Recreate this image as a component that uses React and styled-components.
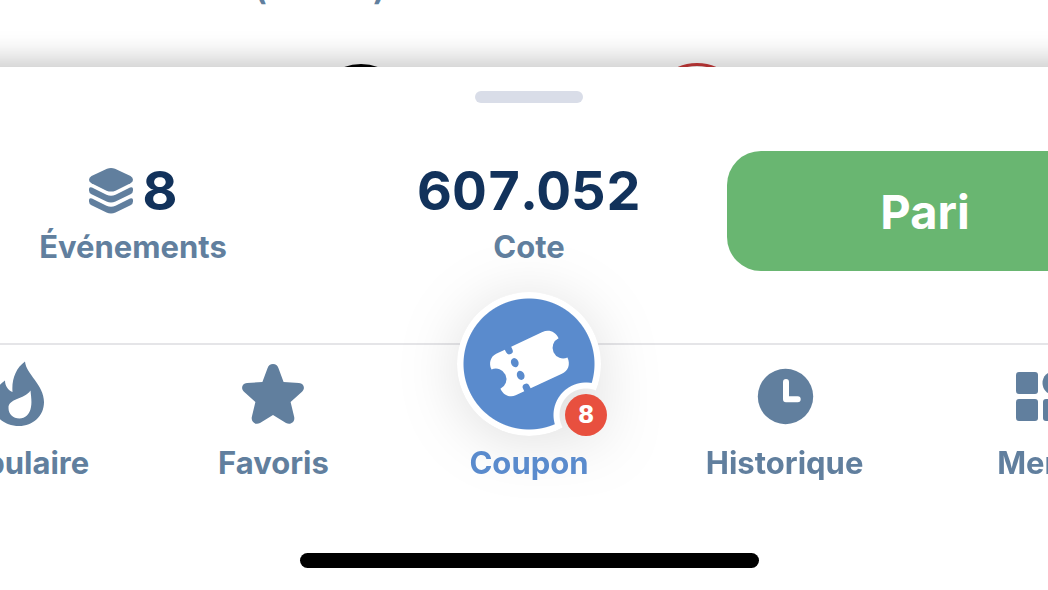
import React from 'react';
import styled, { createGlobalStyle } from 'styled-components';

const colors = {
  slate: '#617f9e',
  navy: '#12325b',
  blue: '#5a8bcd',
  green: '#69b671',
  red: '#e8503f',
};

const GlobalStyle = createGlobalStyle`
  * {
    box-sizing: border-box;
  }

  body {
    margin: 0;
    background-color: #fff;
    font-family: Inter, 'Liberation Sans', sans-serif;
    overflow: hidden;
  }
`;

const Viewport = styled.div`
  min-height: 100vh;
  overflow: hidden;
`;

// the screen is wider than the window and is cut off on both sides
const Screen = styled.div`
  display: flex;
  flex-direction: column;
  min-height: 100vh;
  margin: 0 -120px 0 -110px;
`;

const Backdrop = styled.div`
  display: flex;
  flex-direction: column;
  gap: 56px;
  height: 67px;
  overflow: hidden;
`;

const Score = styled.div`
  display: flex;
  flex-shrink: 0;
  justify-content: space-between;
  width: 130px;
  margin: -29px 0 0 365px;
  color: ${colors.slate};
  font-size: 31px;
  font-weight: 700;
  line-height: 36px;
`;

const Teams = styled.div`
  display: flex;
  flex-shrink: 0;
  justify-content: center;
  gap: 242px;
`;

const TeamSlot = styled.div`
  display: flex;
  align-items: center;
  justify-content: center;
  width: 94px;
`;

const TeamLogo = styled.div`
  width: ${(props) => props.$size}px;
  height: ${(props) => props.$size}px;
  border: 3px solid ${(props) => props.$color};
  border-radius: 50%;
  background-color: ${(props) => props.$fill};
`;

const Sheet = styled.main`
  position: relative;
  display: flex;
  flex: 1;
  flex-direction: column;
  padding-top: 24px;
  background-color: #fff;
  box-shadow: 0 -8px 26px rgba(0, 0, 0, 0.21);
`;

const Handle = styled.div`
  align-self: center;
  width: 108px;
  height: 12px;
  border-radius: 6px;
  background-color: #d9dde8;
`;

const Summary = styled.section`
  display: grid;
  grid-template-columns: repeat(3, 1fr);
  align-items: center;
  margin: 48px 0 72px;
  padding: 0 45px;
`;

const Stat = styled.div`
  display: flex;
  flex-direction: column;
  align-items: center;
  gap: 8px;
  padding-top: 4px;
`;

const StatValue = styled.div`
  display: flex;
  align-items: center;
  gap: 10px;
  color: ${colors.navy};
  font-size: 54px;
  font-weight: 700;
  font-variant-numeric: tabular-nums;
  line-height: 60px;
`;

const Label = styled.span`
  color: ${(props) => (props.$active ? colors.blue : colors.slate)};
  font-size: 31px;
  font-weight: 700;
  line-height: 36px;
`;

const BetButton = styled.button`
  height: 120px;
  padding: 0;
  border: none;
  border-radius: 34px;
  background-color: ${colors.green};
  color: #fff;
  font-family: inherit;
  font-size: 47px;
  font-weight: 700;
  cursor: pointer;
`;

const Nav = styled.nav`
  display: grid;
  grid-template-columns: repeat(5, 1fr);
  padding-top: 15px;
  border-top: 2px solid #e5e5e8;
`;

const NavItem = styled.a`
  display: flex;
  flex-direction: column;
  align-items: center;
  gap: 13px;
  text-decoration: none;

  ${Label} {
    position: relative;
  }
`;

const CouponIcon = styled.span`
  position: relative;
  margin: -68px 0 -4px;
  filter: drop-shadow(0 6px 30px rgba(0, 0, 0, 0.13));
`;

// blue disc with a bite taken out of it around the badge
const Disc = styled.span`
  display: flex;
  align-items: center;
  justify-content: center;
  width: 144px;
  height: 144px;
  border-radius: 50%;
  background:
    radial-gradient(circle at 129px 123px, #fff 32px, transparent 33px),
    radial-gradient(circle, ${colors.blue} 65px, #fff 66px);
  mask-image: radial-gradient(circle at 129px 123px, transparent 26px, #000 27px);
`;

const Badge = styled.span`
  position: absolute;
  right: -6px;
  bottom: 0;
  width: 42px;
  height: 42px;
  border-radius: 50%;
  background-color: ${colors.red};
  color: #fff;
  font-family: 'DejaVu Sans', sans-serif;
  font-size: 24px;
  font-weight: 700;
  line-height: 43px;
  text-align: center;
`;

const HomeIndicator = styled.div`
  align-self: center;
  width: 459px;
  height: 15px;
  margin: 72px 0 22px;
  border-radius: 8px;
  background-color: #000;
`;

const LayersIcon = () => (
  <svg width="44" height="46" viewBox="0 0 44 46" fill={colors.slate} aria-hidden="true">
    <path d="M18 .8Q22-.8 26 .8L41.5 8Q44 9.5 44 11.8Q44 14 41.5 15.3L26.5 22.7Q22 24.5 17.5 22.7L2.5 15.3Q0 14 0 11.8Q0 9.5 2.5 8Z" />
    <path d="M0 21Q0 18.5 3 19.5L17.5 26.8Q22 28.8 26.5 26.8L41 19.5Q44 18.5 44 21V22.5Q44 25 41.5 26.3L26.5 33.5Q22 35.5 17.5 33.5L2.5 26.3Q0 25 0 22.5Z" />
    <path d="M0 32Q0 29.5 3 30.5L17.5 37.8Q22 39.8 26.5 37.8L41 30.5Q44 29.5 44 32V33.5Q44 36 41.5 37.3L26.5 44.5Q22 46.5 17.5 44.5L2.5 37.3Q0 36 0 33.5Z" />
  </svg>
);

const NavIcon = ({ children }) => (
  <svg width="72" height="72" viewBox="0 0 72 72" fill={colors.slate} aria-hidden="true">
    {children}
  </svg>
);

const FlameIcon = () => (
  <NavIcon>
    <path
      fillRule="evenodd"
      d="M43 1.5C44 14 62 25 62 42C62 56 51 66 37 66C22 66 10 56 10 41C10 32 16 26 23 20.5C23 26 26 30 30.5 32C29.5 19 34 8 43 1.5ZM48.5 30.5C49 36 50 42 49 47C48 54 43 58.5 37.5 58.5C31 58.5 26.5 54 26.5 48C26.5 38 42 40 48.5 30.5Z"
    />
  </NavIcon>
);

const StarIcon = () => (
  <NavIcon>
    <path d="M36 4C38.7 4 40.5 5.5 41.4 8L46.6 22L62 23C67 23.4 68.5 28.5 65 31.8L53.6 42L57.2 57C58.2 62 53.5 65.5 49 63L36 55L23 63C18.5 65.5 13.8 62 14.8 57L18.4 42L7 31.8C3.5 28.5 5 23.4 10 23L25.4 22L30.6 8C31.5 5.5 33.3 4 36 4Z" />
  </NavIcon>
);

const ClockIcon = () => (
  <NavIcon>
    <circle cx="36.5" cy="36.5" r="27.7" />
    <path
      d="M37 22V39.3H48.7"
      fill="none"
      stroke="#fff"
      strokeWidth="6"
      strokeLinecap="round"
      strokeLinejoin="round"
    />
  </NavIcon>
);

const MenuIcon = () => (
  <NavIcon>
    <rect x="12" y="12" width="22" height="22" rx="3" />
    <rect x="12" y="39" width="22" height="22" rx="3" />
    <rect x="39" y="39" width="22" height="22" rx="3" />
    <circle cx="50.5" cy="23" r="12" />
  </NavIcon>
);

const TicketIcon = () => (
  <svg width="88" height="88" viewBox="-44.5 -43.5 88 88" aria-hidden="true">
    <g transform="rotate(-25)">
      <path
        fill="#fff"
        d="M-26-23H-16.5V-20A3.5 3.5 0 0 0-9.5-20V-23H25C32-23 37-18 37-10.5A10.5 10.5 0 0 0 37 10.5C37 18 32 23 25 23H-9.5V20A3.5 3.5 0 0 0-16.5 20V23H-26C-32 23-37 18-37 10.5A10.5 10.5 0 0 0-37-10.5C-37-18-32-23-26-23Z"
      />
      <ellipse cx="-13" cy="-7" rx="3.7" ry="4.7" fill={colors.blue} />
      <ellipse cx="-13" cy="7" rx="3.7" ry="4.7" fill={colors.blue} />
    </g>
  </svg>
);

const CouponButton = () => (
  <CouponIcon>
    <Disc>
      <TicketIcon />
    </Disc>
    <Badge>8</Badge>
  </CouponIcon>
);

const navItems = [
  { name: 'Populaire', icon: FlameIcon },
  { name: 'Favoris', icon: StarIcon },
  { name: 'Coupon', icon: CouponButton, active: true },
  { name: 'Historique', icon: ClockIcon },
  { name: 'Menu', icon: MenuIcon },
];

const App = () => (
  <Viewport>
    <GlobalStyle />
    <Screen>
      <Backdrop>
        <Score>
          <span>(</span>
          <span>)</span>
        </Score>
        <Teams>
          <TeamSlot>
            <TeamLogo $size={92} $color="#000" $fill="#000" />
          </TeamSlot>
          <TeamSlot>
            <TeamLogo $size={94} $color="#c93a3a" $fill="#fff" />
          </TeamSlot>
        </Teams>
      </Backdrop>
      <Sheet>
        <Handle />
        <Summary>
          <Stat>
            <StatValue>
              <LayersIcon />
              8
            </StatValue>
            <Label>Événements</Label>
          </Stat>
          <Stat>
            <StatValue>607.052</StatValue>
            <Label>Cote</Label>
          </Stat>
          <BetButton type="button">Pari</BetButton>
        </Summary>
        <Nav>
          {navItems.map(({ name, icon: Icon, active }) => (
            <NavItem key={name} href={`#${name.toLowerCase()}`}>
              <Icon />
              <Label $active={active}>{name}</Label>
            </NavItem>
          ))}
        </Nav>
        <HomeIndicator />
      </Sheet>
    </Screen>
  </Viewport>
);

export default App;
